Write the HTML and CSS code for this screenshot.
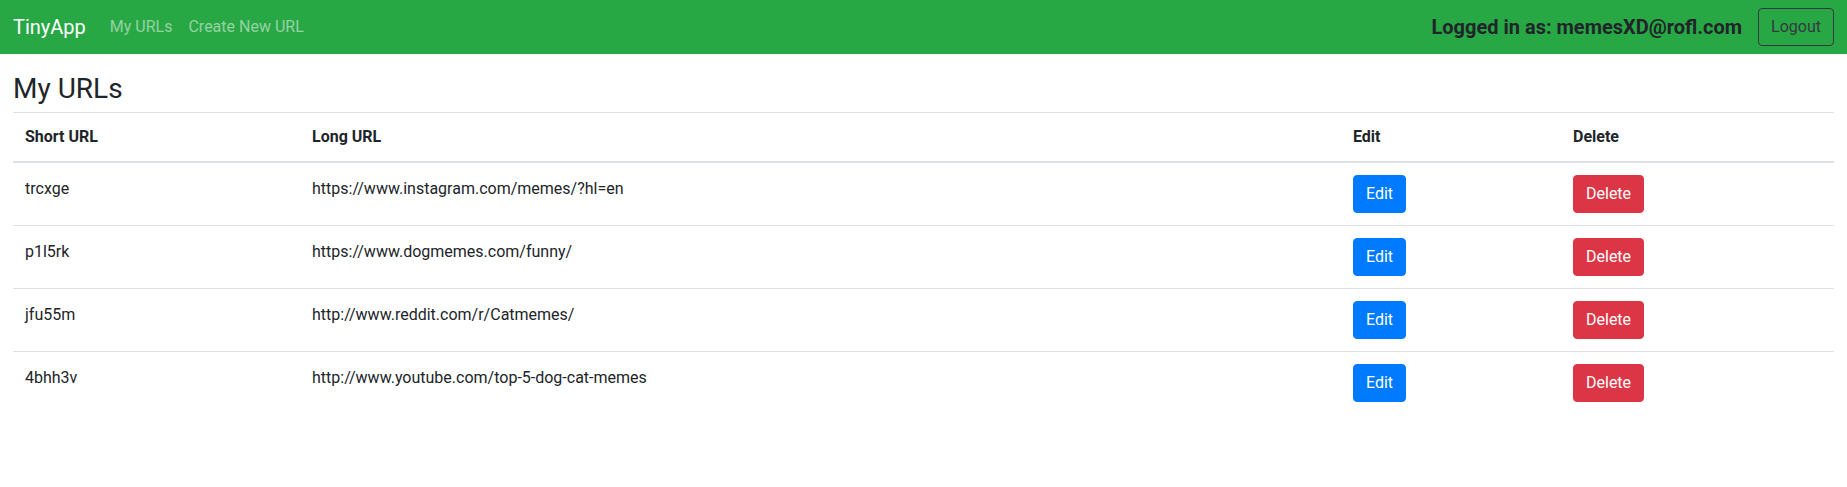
FILE: index.html
```html
<!DOCTYPE html>
<html lang="en">
<head>
<meta charset="utf-8">
<title>TinyApp</title>
<link rel="stylesheet" href="styles.css">
</head>
<body>
<nav class="navbar">
  <a class="brand" href="#">TinyApp</a>
  <div class="nav-links">
    <a class="nav-link" href="#">My URLs</a>
    <a class="nav-link" href="#">Create New URL</a>
  </div>
  <div class="nav-right">
    <span class="user">Logged in as: memesXD@rofl.com</span>
    <button class="btn btn-outline">Logout</button>
  </div>
</nav>
<main class="main">
  <h3 class="title">My URLs</h3>
  <table class="table">
    <colgroup>
      <col class="col-short">
      <col class="col-long">
      <col class="col-edit">
      <col class="col-delete">
    </colgroup>
    <thead>
      <tr><th>Short URL</th><th>Long URL</th><th>Edit</th><th>Delete</th></tr>
    </thead>
    <tbody>
      <tr>
        <td class="text-cell">trcxge</td>
        <td class="text-cell">https://www.instagram.com/memes/?hl=en</td>
        <td><button class="btn btn-primary">Edit</button></td>
        <td><button class="btn btn-danger">Delete</button></td>
      </tr>
      <tr>
        <td class="text-cell">p1l5rk</td>
        <td class="text-cell">https://www.dogmemes.com/funny/</td>
        <td><button class="btn btn-primary">Edit</button></td>
        <td><button class="btn btn-danger">Delete</button></td>
      </tr>
      <tr>
        <td class="text-cell">jfu55m</td>
        <td class="text-cell">http://www.reddit.com/r/Catmemes/</td>
        <td><button class="btn btn-primary">Edit</button></td>
        <td><button class="btn btn-danger">Delete</button></td>
      </tr>
      <tr>
        <td class="text-cell">4bhh3v</td>
        <td class="text-cell">http://www.youtube.com/top-5-dog-cat-memes</td>
        <td><button class="btn btn-primary">Edit</button></td>
        <td><button class="btn btn-danger">Delete</button></td>
      </tr>
    </tbody>
  </table>
</main>
</body>
</html>
```
FILE: styles.css
```css
* { box-sizing: border-box; }
body {
  margin: 0;
  font-family: Roboto, "Liberation Sans", sans-serif;
  font-size: 16px;
  line-height: 24px;
  color: #212529;
  background: #fff;
}
.navbar {
  display: flex;
  align-items: center;
  height: 54px;
  padding: 0 13px;
  background: #28a745;
}
.brand {
  font-size: 20px;
  line-height: 30px;
  color: #fff;
  text-decoration: none;
  margin-right: 16px;
}
.nav-links { display: flex; }
.nav-link {
  padding: 0 8px;
  color: rgba(255, 255, 255, 0.5);
  text-decoration: none;
}
.nav-right {
  margin-left: auto;
  display: flex;
  align-items: center;
}
.user {
  font-size: 20px;
  line-height: 30px;
  font-weight: 700;
  color: #212529;
  margin-right: 16px;
}
.btn {
  display: inline-block;
  font-family: inherit;
  font-size: 16px;
  line-height: 24px;
  padding: 6px 12px;
  border: 1px solid transparent;
  border-radius: 4px;
  cursor: pointer;
}
.btn-outline {
  background: transparent;
  border-color: #343a40;
  color: #343a40;
}
.btn-primary { background: #007bff; border-color: #007bff; color: #fff; }
.btn-danger { background: #dc3545; border-color: #dc3545; color: #fff; }
.main { padding: 0 13px; }
.title {
  margin: 18px 0 6px;
  font-size: 28px;
  line-height: 1.2;
  font-weight: 400;
}
.table {
  width: 100%;
  border-collapse: collapse;
  table-layout: fixed;
}
.col-short { width: 287px; }
.col-long { width: 1041px; }
.col-edit { width: 220px; }
.col-delete { width: 273px; }
.table th,
.table td {
  padding: 12px;
  border-top: 1px solid #dee2e6;
  text-align: left;
  vertical-align: top;
}
.table td.text-cell {
  padding-top: 14px;
  padding-bottom: 10px;
}
.table th {
  font-weight: 700;
  vertical-align: bottom;
  border-bottom: 2px solid #dee2e6;
}
```
